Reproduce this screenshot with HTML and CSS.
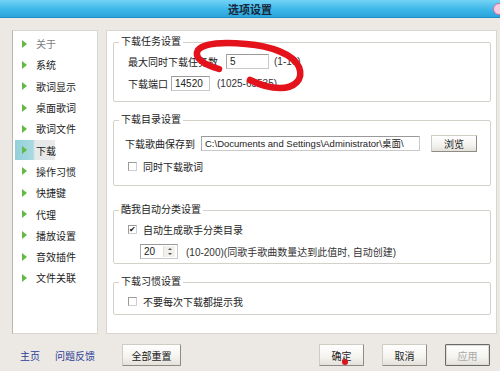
FILE: index.html
```html
<!DOCTYPE html>
<html>

<head>
  <meta charset="utf-8">
  <title>选项设置</title>
  <link rel="stylesheet" href="styles.css">
</head>

<body>

  <div class="title_bar">
    <span class="title">选项设置</span>
    <span class="close_btn"></span>
  </div>

  <div class="main">
    <ul class="side_menu">
      <li class="menu_item muted"><span class="arrow"></span>关于</li>
      <li class="menu_item"><span class="arrow"></span>系统</li>
      <li class="menu_item"><span class="arrow"></span>歌词显示</li>
      <li class="menu_item"><span class="arrow"></span>桌面歌词</li>
      <li class="menu_item"><span class="arrow"></span>歌词文件</li>
      <li class="menu_item selected"><span class="arrow"></span>下载</li>
      <li class="menu_item"><span class="arrow"></span>操作习惯</li>
      <li class="menu_item"><span class="arrow"></span>快捷键</li>
      <li class="menu_item"><span class="arrow"></span>代理</li>
      <li class="menu_item"><span class="arrow"></span>播放设置</li>
      <li class="menu_item"><span class="arrow"></span>音效插件</li>
      <li class="menu_item"><span class="arrow"></span>文件关联</li>
    </ul>

    <div class="content">
      <fieldset class="group group_task">
        <legend>下载任务设置</legend>
        <div class="row row_first">
          <span class="label">最大同时下载任务数</span>
          <span class="field field_task">5</span>
          <span class="hint">(1-10)</span>
        </div>
        <div class="row row_second">
          <span class="label">下载端口</span>
          <span class="field field_port">14520</span>
          <span class="hint">(1025-65535)</span>
        </div>
      </fieldset>

      <fieldset class="group group_dir">
        <legend>下载目录设置</legend>
        <div class="row row_path">
          <span class="label">下载歌曲保存到</span>
          <span class="field field_path">C:\Documents and Settings\Administrator\桌面\</span>
          <button class="btn btn_small">浏览</button>
        </div>
        <div class="row row_check">
          <span class="checkbox"></span>
          <span class="label">同时下载歌词</span>
        </div>
      </fieldset>

      <fieldset class="group group_sort">
        <legend>酷我自动分类设置</legend>
        <div class="row row_check_top">
          <span class="checkbox checked">&#10004;</span>
          <span class="label">自动生成歌手分类目录</span>
        </div>
        <div class="row row_spin">
          <span class="spinbox">
            <span class="spin_value">20</span>
            <span class="spin_arrows">
              <span class="spin_up"></span>
              <span class="spin_down"></span>
            </span>
          </span>
          <span class="hint">(10-200)(同歌手歌曲数量达到此值时, 自动创建)</span>
        </div>
      </fieldset>

      <fieldset class="group group_habit">
        <legend>下载习惯设置</legend>
        <div class="row row_check_top">
          <span class="checkbox"></span>
          <span class="label">不要每次下载都提示我</span>
        </div>
      </fieldset>
    </div>
  </div>

  <div class="footer">
    <a class="link">主页</a>
    <a class="link link_feedback">问题反馈</a>
    <button class="btn btn_reset">全部重置</button>
    <span class="spacer"></span>
    <button class="btn btn_ok">确定<span class="red_dot"></span></button>
    <button class="btn btn_cancel">取消</button>
    <button class="btn btn_apply">应用</button>
  </div>

  <!-- hand drawn marker on the screenshot -->
  <svg class="scribble" width="500" height="371" viewBox="0 0 500 371">
    <path d="M219 69 C205 65 193 58 198 50 C204 43 225 42 246 44 C271 46 293 54 299 67 C304 80 294 88 280 88 C268 88 258 84 250 80"
      fill="none" stroke="#e4121b" stroke-width="6.5" stroke-linecap="round" />
  </svg>

</body>

</html>
```

FILE: styles.css
```css
* {
  box-sizing: border-box;
}

html,
body {
  margin: 0;
  padding: 0;
}

body {
  position: relative;
  width: 500px;
  height: 371px;
  overflow: hidden;
  background: #ece9e4;
  font-family: "Liberation Sans", "Noto Sans CJK SC", sans-serif;
  font-size: 10px;
  color: #222;
}

.title_bar {
  position: relative;
  height: 18px;
  display: flex;
  align-items: center;
  justify-content: center;
  background: linear-gradient(#74d3f5, #3db7e9 55%, #2aa3dc);
  border-bottom: 1px solid #1f8cc5;
}

.title {
  font-size: 11px;
  font-weight: bold;
  color: #16283a;
}

.close_btn {
  position: absolute;
  right: -5px;
  top: 3px;
  width: 12px;
  height: 12px;
  border-radius: 50%;
  background: #f7cde0;
  border: 1px solid #d66fa2;
}

.main {
  display: flex;
  gap: 8px;
  height: 316px;
  padding: 12px 3px 0 12px;
}

.side_menu {
  width: 86px;
  height: 304px;
  margin: 0;
  padding: 2px 0 0 2px;
  list-style: none;
  background: #fff;
  border: 1px solid #d8d6d0;
  border-left-color: #b9b6ae;
}

.menu_item {
  height: 21.3px;
  display: flex;
  align-items: center;
  white-space: nowrap;
}

.menu_item .arrow {
  flex: none;
  width: 0;
  height: 0;
  margin: 0 9px 0 7px;
  border-top: 4px solid transparent;
  border-bottom: 4px solid transparent;
  border-left: 5px solid #62b944;
}

.menu_item.muted {
  color: #7d7d7d;
}

.menu_item.selected {
  width: 40px;
  height: 20px;
  margin: 0.65px 0;
  background: linear-gradient(90deg, #93d0da 0, #a9d9e0 45%, #e6e9e9 50%, #e9eaea 100%);
}

.content {
  flex: 1;
  height: 304px;
  padding: 4px 5px 0 6px;
  background: #fff;
  border: 1px solid #d8d6d0;
}

.group {
  margin: 0;
  padding: 0 5px;
  border: 1px solid #d3d1c9;
  border-radius: 2px;
}

.group legend {
  padding: 0 2px;
  font-size: 10px;
  line-height: 14px;
  color: #222;
}

.group_task {
  height: 67px;
}

.group_dir {
  height: 73px;
  margin-top: 11px;
}

.group_sort {
  height: 61px;
  margin-top: 17px;
}

.group_habit {
  height: 40px;
  margin-top: 11px;
}

.row {
  display: flex;
  align-items: center;
  margin-left: 9px;
}

.row_first {
  height: 15px;
  margin-top: 5px;
}

.row_second {
  height: 14px;
  margin-top: 7px;
}

.row_path {
  height: 17px;
  margin-top: 8px;
  margin-left: 6px;
}

.row_check {
  height: 14px;
  margin-top: 7px;
}

.row_check_top {
  height: 14px;
  margin-top: 5px;
}

.row_spin {
  height: 15px;
  margin-top: 8px;
  margin-left: 21px;
}

.field {
  height: 15px;
  line-height: 13px;
  padding: 0 3px;
  background: #fff;
  border: 1px solid #c9c9c9;
  border-top-color: #999;
  border-left-color: #a8a8a8;
  white-space: nowrap;
  overflow: hidden;
}

.field_task {
  width: 43px;
  margin: 0 5px 0 8px;
}

.field_port {
  width: 39px;
  margin: 0 7px 0 3px;
}

.field_path {
  width: 219px;
  margin: 0 11px 0 6px;
  font-size: 9.5px;
  letter-spacing: 0;
}

.hint {
  color: #333;
}

.checkbox {
  width: 9px;
  height: 9px;
  margin: 0 6px 0 0;
  border: 1px solid #cfcfcf;
  border-top-color: #9a9a9a;
  border-left-color: #9a9a9a;
  background: #fff;
  font-size: 8px;
  line-height: 7px;
  text-align: center;
  color: #111;
}

.spinbox {
  display: flex;
  width: 38px;
  height: 15px;
  margin-right: 8px;
  border: 1px solid #c9c9c9;
  border-top-color: #999;
  border-left-color: #a8a8a8;
}

.spin_value {
  flex: 1;
  padding-left: 3px;
  line-height: 13px;
}

.spin_arrows {
  display: flex;
  flex-direction: column;
  justify-content: space-around;
  align-items: center;
  width: 12px;
  margin: 1px 2px 1px 0;
  background: #f1f0ec;
  border-left: 1px solid #e0ded8;
}

.spin_up {
  width: 0;
  height: 0;
  border-left: 2px solid transparent;
  border-right: 2px solid transparent;
  border-bottom: 2px solid #555;
}

.spin_down {
  width: 0;
  height: 0;
  border-left: 2px solid transparent;
  border-right: 2px solid transparent;
  border-top: 2px solid #555;
}

.btn {
  position: relative;
  height: 22px;
  padding: 0;
  font-family: "Liberation Sans", "Noto Sans CJK SC", sans-serif;
  font-size: 10px;
  color: #222;
  background: linear-gradient(#ffffff, #f4f3ef 60%, #e4e1da);
  border: 1px solid #cfccc4;
  border-right-color: #8e8b84;
  border-bottom-color: #8e8b84;
  border-radius: 1px;
}

.btn_small {
  width: 46px;
  height: 17px;
}

.footer {
  display: flex;
  align-items: center;
  height: 37px;
  padding: 10px 0 5px 20px;
}

.link {
  color: #2d3c98;
  font-size: 10px;
}

.link_feedback {
  margin-left: 15px;
}

.btn_reset {
  width: 59px;
  margin-left: 27px;
}

.spacer {
  width: 138px;
}

.btn_ok,
.btn_cancel,
.btn_apply {
  width: 45px;
}

.btn_cancel {
  margin-left: 18px;
}

.btn_apply {
  margin-left: 18px;
  color: #a8a8a8;
  border: 1px solid #6a6a6a;
  box-shadow: inset 0 0 0 1px #dcdad4;
}

.red_dot {
  position: absolute;
  left: 22px;
  top: 14px;
  width: 6px;
  height: 6px;
  border-radius: 50%;
  background: #d8141c;
}

.scribble {
  position: absolute;
  left: 0;
  top: 0;
  pointer-events: none;
}
```
